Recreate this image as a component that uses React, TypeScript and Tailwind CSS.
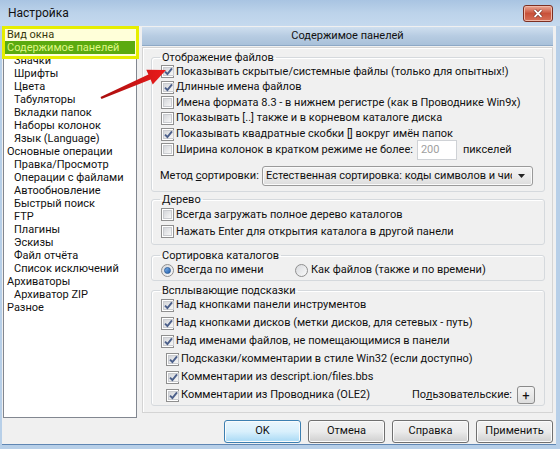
import type { ReactNode } from 'react';

const tree: { label: string; level: number }[] = [
  { label: 'Вид окна', level: 0 },
  { label: 'Содержимое панелей', level: 0 },
  { label: 'Значки', level: 1 },
  { label: 'Шрифты', level: 1 },
  { label: 'Цвета', level: 1 },
  { label: 'Табуляторы', level: 1 },
  { label: 'Вкладки папок', level: 1 },
  { label: 'Наборы колонок', level: 1 },
  { label: 'Язык (Language)', level: 1 },
  { label: 'Основные операции', level: 0 },
  { label: 'Правка/Просмотр', level: 1 },
  { label: 'Операции с файлами', level: 1 },
  { label: 'Автообновление', level: 1 },
  { label: 'Быстрый поиск', level: 1 },
  { label: 'FTP', level: 1 },
  { label: 'Плагины', level: 1 },
  { label: 'Эскизы', level: 1 },
  { label: 'Файл отчёта', level: 1 },
  { label: 'Список исключений', level: 1 },
  { label: 'Архиваторы', level: 0 },
  { label: 'Архиватор ZIP', level: 1 },
  { label: 'Разное', level: 0 },
];

function CheckBox({ checked }: { checked: boolean }) {
  return (
    <span className="w-[13px] h-[13px] shrink-0 border border-[#8f8f8f] bg-white p-[1px] flex">
      <span className="flex-1 bg-gradient-to-br from-[#d4d6da] to-[#f7f7f7] border border-[#c9cbcf] flex items-center justify-center">
        {checked && (
          <svg width="9" height="9" viewBox="0 0 9 9">
            <path d="M1 4.6 L3.4 7 L8 1.4" fill="none" stroke="#4b5f8a" strokeWidth="1.9" />
          </svg>
        )}
      </span>
    </span>
  );
}

function Radio({ checked }: { checked: boolean }) {
  return (
    <span className="w-[13px] h-[13px] shrink-0 rounded-full border border-[#8f8f8f] bg-gradient-to-br from-[#d8dadd] to-[#fafafa] flex items-center justify-center">
      {checked && <span className="w-[7px] h-[7px] rounded-full bg-gradient-to-br from-[#7fb2e8] to-[#1f5fae] border border-[#2f5f9a]" />}
    </span>
  );
}

function Row({ checked, children, className }: { checked: boolean; children: ReactNode; className: string }) {
  return (
    <div className={'flex items-center ' + className}>
      <CheckBox checked={checked} />
      <span className="ml-[2px] whitespace-nowrap">{children}</span>
    </div>
  );
}

function Group({ title, className, children }: { title: string; className: string; children: ReactNode }) {
  return (
    <fieldset className={'border border-[#d5d9dd] rounded-[3px] shadow-[inset_1px_1px_0_#fff] ' + className}>
      <legend className="ml-[8px] px-[2px] leading-[13px]">{title}</legend>
      {children}
    </fieldset>
  );
}

function Button({ label, main }: { label: string; main?: boolean }) {
  return (
    <div
      className={
        'w-[77px] h-[23px] rounded-[3px] border flex items-center justify-center shadow-[inset_0_0_0_1px_#fbfbfb] ' +
        (main
          ? 'border-[#3c7fb1] bg-gradient-to-b from-[#eaf6fd] via-[#d9f0fc] to-[#a7d9f5]'
          : 'border-[#707070] bg-gradient-to-b from-[#f2f2f2] via-[#ebebeb] to-[#cfcfcf]')
      }
    >
      {label}
    </div>
  );
}

export default function App() {
  return (
    <div className="relative w-[560px] h-[449px] overflow-hidden flex flex-col bg-[#b7cfe8] text-[11px] text-[#111] font-['Roboto','Liberation_Sans',sans-serif]">
      {/* заголовок окна */}
      <div className="h-[26px] shrink-0 flex items-center justify-between pl-[8px] pr-[7px] bg-gradient-to-b from-[#a9c4e2] via-[#bcd3ea] to-[#c5d9ee]">
        <span className="text-[12px]">Настройка</span>
        <div className="w-[30px] h-[17px] rounded-[3px] border border-[#7c2f22] bg-gradient-to-b from-[#e9a795] via-[#c8513a] to-[#d77058] flex items-center justify-center shadow-[inset_0_0_0_1px_#f0b8a8]">
          <svg width="10" height="9" viewBox="0 0 10 9">
            <path d="M1.5 1 L8.5 8 M8.5 1 L1.5 8" stroke="#5a1a10" strokeWidth="3" />
            <path d="M1.5 1 L8.5 8 M8.5 1 L1.5 8" stroke="#fff" strokeWidth="1.8" />
          </svg>
        </div>
      </div>

      <div className="flex-1 flex flex-col ml-[2px] mr-[4px] mb-[4px] bg-[#f0f0f0] pl-[1px] pr-[3px] border-b border-[#5f86b3]">
        <div className="flex h-[391px] mt-[1px]">
          {/* дерево настроек */}
          <div className="relative w-[134px] shrink-0 border border-[#828790] bg-white">
            {tree.map((t, i) => (
              <div
                key={t.label}
                className={
                  'h-[13px] leading-[13px] whitespace-nowrap ' +
                  (t.level ? 'pl-[10px] ' : 'pl-[3px] ') +
                  (i === 1 ? 'bg-[#3f9c12] text-[#d9f59a] mx-[1px] !pl-[2px]' : '')
                }
              >
                {t.label}
              </div>
            ))}
            <div className="absolute left-[-2px] top-[-2px] w-[137px] h-[33px] border-[3px] border-[#e6ee00] bg-[#ffff00]/15" />
          </div>

          <div className="flex-1 ml-[5px] flex flex-col h-[386px]">
            <div className="h-[19px] shrink-0 flex items-center justify-center bg-gradient-to-b from-[#cfdfef] via-[#b7cce2] to-[#a9c1da] border-b border-[#8ea9c6]">
              Содержимое панелей
            </div>
            <div className="flex-1 mt-[1px] border border-[#d4d4d4] shadow-[inset_1px_1px_0_#fff] pl-[8px] pr-[7px]">
              <Group title="Отображение файлов" className="mt-[3px] pb-[5px]">
                <div className="pl-[9px]">
                  <Row checked className="h-[15.6px]">Показывать скрытые/системные файлы (только для опытных!)</Row>
                  <Row checked className="h-[15.6px]">Длинные имена файлов</Row>
                  <Row checked={false} className="h-[15.6px]">Имена формата 8.3 - в нижнем регистре (как в Проводнике Win9x)</Row>
                  <Row checked={false} className="h-[15.6px]">Показывать [..] также и в корневом каталоге диска</Row>
                  <Row checked className="h-[15.6px]">Показывать квадратные скобки [] вокруг имён папок</Row>
                  <div className="flex items-center h-[15.6px]">
                    <CheckBox checked={false} />
                    <span className="ml-[2px] whitespace-nowrap">Ширина колонок в кратком режиме не более:</span>
                    <div className="ml-[4px] w-[40px] h-[20px] shrink-0 border border-[#cfd2d6] bg-white flex items-center pl-[3px] text-[#a0a0a0]">200</div>
                    <span className="ml-[6px]">пикселей</span>
                  </div>
                  <div className="flex items-center justify-between h-[20px] mt-[8.4px] pr-[11px]">
                    <span className="-ml-[1px]">
                      Метод <span className="underline">с</span>ортировки:
                    </span>
                    <div className="w-[271px] h-[20px] rounded-[3px] border border-[#9a9a9a] bg-gradient-to-b from-[#f4f4f4] via-[#ebebeb] to-[#dcdcdc] flex items-center pl-[3px] pr-[7px] shadow-[inset_0_0_0_1px_#fafafa]">
                      <span className="flex-1 overflow-hidden whitespace-nowrap">Естественная сортировка: коды символов и числа</span>
                      <svg width="7" height="4" viewBox="0 0 7 4" className="ml-[6px]">
                        <path d="M0 0 H7 L3.5 4 Z" fill="#222" />
                      </svg>
                    </div>
                  </div>
                </div>
              </Group>

              <Group title="Дерево" className="mt-[1.5px] pb-[4px]">
                <div className="pl-[9px]">
                  <Row checked={false} className="h-[17px]">Всегда загружать полное дерево каталогов</Row>
                  <Row checked={false} className="h-[17px]">Нажать Enter для открытия каталога в другой панели</Row>
                </div>
              </Group>

              <Group title="Сортировка каталогов" className="mt-[3.5px] pb-[1px]">
                <div className="pl-[9px] flex items-center h-[17px]">
                  <Radio checked />
                  <span className="ml-[3px] w-[118px]">Всегда по имени</span>
                  <Radio checked={false} />
                  <span className="ml-[3px]">Как файлов (также и по времени)</span>
                </div>
              </Group>

              <Group title="Всплывающие подсказки" className="mt-[3.5px] pb-[1px]">
                <div className="pl-[9px] -mt-[1px]">
                  <Row checked className="h-[18px]">Над кнопками панели инструментов</Row>
                  <Row checked className="h-[18px]">Над кнопками дисков (метки дисков, для сетевых - путь)</Row>
                  <Row checked className="h-[18px]">Над именами файлов, не помещающимися в панели</Row>
                  <div className="pl-[5px]">
                    <Row checked className="h-[18px]">Подсказки/комментарии в стиле Win32 (если доступно)</Row>
                    <Row checked className="h-[18px]">Комментарии из descript.ion/files.bbs</Row>
                    <div className="flex items-center h-[18px] pr-[9px]">
                      <CheckBox checked />
                      <span className="ml-[2px] whitespace-nowrap">Комментарии из Проводника (OLE2)</span>
                      <span className="ml-auto">
                        По<span className="underline">л</span>ьзовательские:
                      </span>
                      <div className="ml-[5px] w-[18px] h-[18px] rounded-[3px] border border-[#8a8a8a] bg-gradient-to-b from-[#f4f4f4] to-[#dddddd] flex items-center justify-center text-[13px] leading-none">
                        +
                      </div>
                    </div>
                  </div>
                </div>
              </Group>
            </div>
          </div>
        </div>

        {/* кнопки диалога */}
        <div className="flex justify-end gap-[7px] mt-[2px]">
          <Button label="OK" main />
          <Button label="Отмена" />
          <Button label="Справка" />
          <Button label="Применить" />
        </div>
      </div>

      {/* красная стрелка поверх */}
      <svg className="absolute left-0 top-0 pointer-events-none" width="560" height="449">
        <defs>
          <linearGradient id="arr" x1="0" y1="0" x2="1" y2="0">
            <stop offset="0" stopColor="#a80d0d" />
            <stop offset="1" stopColor="#ec1c1c" />
          </linearGradient>
        </defs>
        <polygon
          points="100.5,96.9 148.4,74.6 146.3,69.8 166,70 152.7,84.4 150.6,79.6 101.5,99.1"
          fill="url(#arr)"
        />
      </svg>
    </div>
  );
}
